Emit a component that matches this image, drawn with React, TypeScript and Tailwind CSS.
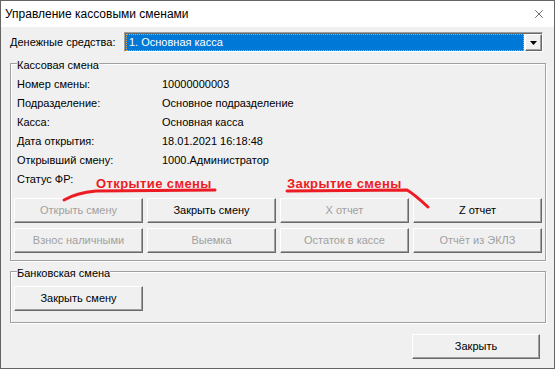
import { X } from "lucide-react"

type Row = { label: string; value: string }

const rows: Row[] = [
  { label: "Номер смены:", value: "10000000003" },
  { label: "Подразделение:", value: "Основное подразделение" },
  { label: "Касса:", value: "Основная касса" },
  { label: "Дата открытия:", value: "18.01.2021 16:18:48" },
  { label: "Открывший смену:", value: "1000.Администратор" },
  { label: "Статус ФР:", value: "" },
]

const shiftButtons = [
  { text: "Открыть смену", enabled: false },
  { text: "Закрыть смену", enabled: true },
  { text: "X отчет", enabled: false },
  { text: "Z отчет", enabled: true },
  { text: "Взнос наличными", enabled: false },
  { text: "Выемка", enabled: false },
  { text: "Остаток в кассе", enabled: false },
  { text: "Отчёт из ЭКЛЗ", enabled: false },
]

function WinButton({ text, enabled = true, className = "" }: { text: string; enabled?: boolean; className?: string }) {
  return (
    <button
      className={
        "h-[25px] bg-[#f0f0f0] border border-t-white border-l-white border-r-[#696969] border-b-[#696969] shadow-[inset_-1px_-1px_0_#a0a0a0] flex items-center justify-center " +
        (enabled ? "text-black " : "text-[#a0a0a0] ") +
        className
      }
    >
      {text}
    </button>
  )
}

function GroupBox({ title, className = "", children }: { title: string; className?: string; children: React.ReactNode }) {
  return (
    <div className={"relative border border-[#a0a0a0] shadow-[inset_1px_1px_0_#fff,1px_1px_0_#fff] " + className}>
      <span className="absolute left-[6px] top-[-5px] bg-[#f0f0f0] leading-[13px]">{title}</span>
      {children}
    </div>
  )
}

export default function App() {
  return (
    <div className="relative w-[555px] h-[369px] font-['Liberation_Sans',Arial,sans-serif] text-[11px] text-black">
      <div className="w-full h-full border border-[#646464] bg-[#f0f0f0] flex flex-col">
        {/* title bar */}
        <div className="h-[26px] bg-white flex items-center justify-between pl-[4px] pr-[8px] text-[12px]">
          <span>Управление кассовыми сменами</span>
          <X className="w-[14px] h-[14px]" strokeWidth={1} />
        </div>

        <div className="flex-1 flex flex-col px-[9px] pt-[5px]">
          {/* cash selector */}
          <div className="flex items-center h-[20px]">
            <span className="w-[114px]">Денежные средства:</span>
            <div className="w-[419px] h-[20px] flex items-stretch bg-white border border-t-[#a0a0a0] border-l-[#a0a0a0] border-r-white border-b-white shadow-[inset_1px_1px_0_#696969]">
              <div className="flex-1 ml-[1px] mt-[1px] bg-[#0078d7] outline-1 outline-dotted outline-[#f5a040] -outline-offset-1 text-white flex items-center pl-[3px]">
                1. Основная касса
              </div>
              <div className="w-[17px] ml-[1px] mt-[1px] bg-[#f0f0f0] border border-t-white border-l-white border-r-[#696969] border-b-[#696969] shadow-[inset_-1px_-1px_0_#a0a0a0] flex items-center justify-center">
                <svg width="7" height="4" viewBox="0 0 7 4">
                  <path d="M0 0h7L3.5 4z" fill="#000" />
                </svg>
              </div>
            </div>
          </div>

          {/* cash shift */}
          <GroupBox title="Кассовая смена" className="mt-[11px] h-[198px] w-[536px] pt-[11px]">
            <div className="flex flex-col px-[6px]">
              {rows.map((r) => (
                <div key={r.label} className="h-[19px] flex items-center">
                  <span className="w-[145px]">{r.label}</span>
                  <span>{r.value}</span>
                </div>
              ))}
            </div>
            <div className="mt-[9px] px-[3px] grid grid-cols-[129px_129px_129px_129px] gap-x-[4px] gap-y-[5px]">
              {shiftButtons.map((b) => (
                <WinButton key={b.text} text={b.text} enabled={b.enabled} />
              ))}
            </div>
          </GroupBox>

          {/* bank shift */}
          <GroupBox title="Банковская смена" className="mt-[10px] h-[52px] w-[536px] pt-[14px] px-[3px]">
            <WinButton text="Закрыть смену" className="w-[129px]" />
          </GroupBox>

          <div className="mt-[11px] flex justify-end pr-[5px]">
            <WinButton text="Закрыть" className="w-[128px]" />
          </div>
        </div>
      </div>

      {/* red annotations drawn over the screenshot */}
      <span className="absolute left-[96px] top-[177px] text-[13px] leading-none font-bold tracking-[0.4px] text-[#ed1c24]">Открытие смены</span>
      <span className="absolute left-[287px] top-[177px] text-[13px] leading-none font-bold tracking-[0.4px] text-[#ed1c24]">Закрытие смены</span>
      <svg className="absolute left-0 top-0 pointer-events-none" width="555" height="369" viewBox="0 0 555 369">
        <path d="M64 200 Q76 193 96 191 L215 190" stroke="#ed1c24" strokeWidth="3" fill="none" strokeLinecap="round" />
        <path d="M287 191 L407 190 Q414 194 428 207" stroke="#ed1c24" strokeWidth="3" fill="none" strokeLinecap="round" />
      </svg>
    </div>
  )
}
